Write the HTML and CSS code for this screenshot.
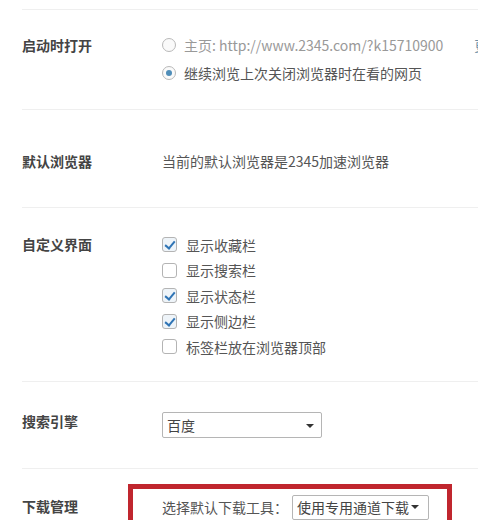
FILE: index.html
```html
<!DOCTYPE html>
<html lang="zh-CN">

<head>
  <title>设置</title>
  <link rel="stylesheet" href="styles.css">
</head>

<body>
  <div class="settings">

    <div class="row startup">
      <div class="label">启动时打开</div>
      <div class="value">
        <div class="item">
          <span class="radio"></span>
          <span class="faded">主页: http://www.2345.com/?k15710900</span>
          <span class="change">更改</span>
        </div>
        <div class="item">
          <span class="radio on"></span>
          <span>继续浏览上次关闭浏览器时在看的网页</span>
        </div>
      </div>
    </div>

    <div class="row browser">
      <div class="label">默认浏览器</div>
      <div class="value">
        <div class="item">当前的默认浏览器是2345加速浏览器</div>
      </div>
    </div>

    <div class="row ui">
      <div class="label">自定义界面</div>
      <div class="value">
        <div class="item"><span class="check on"></span>显示收藏栏</div>
        <div class="item"><span class="check"></span>显示搜索栏</div>
        <div class="item"><span class="check on"></span>显示状态栏</div>
        <div class="item"><span class="check on"></span>显示侧边栏</div>
        <div class="item"><span class="check"></span>标签栏放在浏览器顶部</div>
      </div>
    </div>

    <div class="row search">
      <div class="label">搜索引擎</div>
      <div class="value">
        <div class="select wide">百度<span class="arrow"></span></div>
      </div>
    </div>

    <div class="row download">
      <div class="label">下载管理</div>
      <div class="redbox">
        <span>选择默认下载工具：</span>
        <div class="select small">使用专用通道下载<span class="arrow"></span></div>
      </div>
    </div>

  </div>
</body>

</html>
```

FILE: styles.css
```css
body {
  margin: 0;
  background: #fff;
  font-family: "Noto Sans CJK SC", "Liberation Sans", sans-serif;
  font-size: 14px;
  color: #555;
  overflow: hidden;
}

.settings {
  padding-top: 9px;
  padding-left: 22px;
}

.row {
  display: flex;
  border-top: 1px solid #efefef;
}

.label {
  width: 140px;
  flex: none;
  font-weight: bold;
  color: #444;
  line-height: 28px;
}

.value {
  flex: 1;
  min-width: 0;
}

.item {
  display: flex;
  align-items: center;
  white-space: nowrap;
}

/* rows */
.startup {
  padding: 21px 0 22px;
}
.startup .item {
  height: 28px;
}

.browser {
  padding: 37px 0 32px;
}
.browser .label,
.browser .item {
  line-height: 28px;
}

.ui {
  padding: 24px 0 21px;
}
.ui .label {
  line-height: 25px;
}
.ui .item {
  height: 25.5px;
}

.search {
  padding: 30px 0 30px;
}
.search .label {
  line-height: 18px;
}

.download {
  padding-top: 15px;
  height: 60px;
}
.download .label {
  width: 106px;
  padding-top: 8px;
}

/* controls */
.radio {
  width: 12px;
  height: 12px;
  border: 1px solid #b9b9b9;
  border-radius: 50%;
  margin-right: 8px;
  background: #fafafa;
  flex: none;
  position: relative;
}
.radio.on::after {
  content: "";
  position: absolute;
  left: 3px;
  top: 3px;
  width: 6px;
  height: 6px;
  border-radius: 50%;
  background: #4f8db8;
}

.faded {
  color: #999;
}
.change {
  margin-left: 31px;
  color: #6d8fa8;
}

.check {
  width: 13px;
  height: 13px;
  border: 1px solid #b4b4b4;
  border-radius: 3px;
  margin-right: 9px;
  flex: none;
  position: relative;
  background: #fff;
}
.check.on {
  background: #eef4f9;
}
.check.on::after {
  content: "";
  position: absolute;
  left: 4px;
  top: 1px;
  width: 4px;
  height: 8px;
  border: solid #2f74b5;
  border-width: 0 2px 2px 0;
  transform: rotate(40deg);
}

.select {
  display: flex;
  align-items: center;
  border: 1px solid #b5b5b5;
  border-radius: 2px;
  box-sizing: border-box;
  color: #444;
  background: #fff;
  position: relative;
}
.select.wide {
  width: 160px;
  height: 26px;
  padding-left: 4px;
}
.select.wide .arrow {
  position: absolute;
  left: 141px;
  top: 11px;
}
.select.small {
  width: 137px;
  height: 25px;
  padding-left: 4px;
  margin-left: 4px;
}
.arrow {
  width: 0;
  height: 0;
  border-left: 4px solid transparent;
  border-right: 4px solid transparent;
  border-top: 4px solid #333;
  margin-left: 2px;
}

.redbox {
  width: 324px;
  height: 60px;
  box-sizing: border-box;
  border: 5px solid #c0262e;
  border-bottom: none;
  display: flex;
  align-items: flex-start;
  padding: 6px 0 0 29px;
  line-height: 25px;
  white-space: nowrap;
}
```
